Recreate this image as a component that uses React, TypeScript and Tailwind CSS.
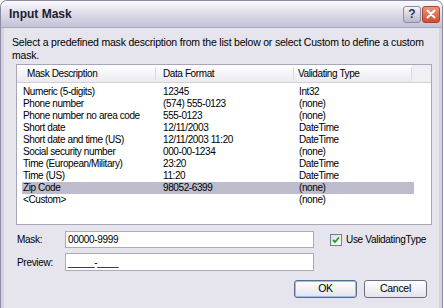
import React from 'react'

const rows = [
  ['Numeric (5-digits)', '12345', 'Int32'],
  ['Phone number', '(574) 555-0123', '(none)'],
  ['Phone number no area code', '555-0123', '(none)'],
  ['Short date', '12/11/2003', 'DateTime'],
  ['Short date and time (US)', '12/11/2003 11:20', 'DateTime'],
  ['Social security number', '000-00-1234', '(none)'],
  ['Time (European/Military)', '23:20', 'DateTime'],
  ['Time (US)', '11:20', 'DateTime'],
  ['Zip Code', '98052-6399', '(none)'],
  ['<Custom>', '', '(none)'],
]

const font = { fontFamily: '"Liberation Sans", Arial, sans-serif' }

function TitleButtons() {
  return (
    <div className="flex gap-[1px] mr-[2px]">
      <div className="w-[18px] h-[17px] rounded-[3px] border border-[#8d8ca6] bg-gradient-to-b from-[#f4f4f8] to-[#b9b8cc] flex items-center justify-center text-[12px] font-bold text-[#33334a]">
        ?
      </div>
      <div className="w-[18px] h-[17px] rounded-[3px] border border-[#a8432c] bg-gradient-to-b from-[#f0947a] to-[#cf4b2e] flex items-center justify-center">
        <svg width="10" height="10" viewBox="0 0 10 10">
          <path d="M1.5 1.5 L8.5 8.5 M8.5 1.5 L1.5 8.5" stroke="white" strokeWidth="2" strokeLinecap="round" />
        </svg>
      </div>
    </div>
  )
}

function Button({ label, primary }: { label: string; primary?: boolean }) {
  return (
    <div
      className={`w-[63px] h-[18px] rounded-[3px] border flex items-center justify-center bg-gradient-to-b from-[#ffffff] to-[#e4e3ec] text-[10.5px] text-black ${
        primary ? 'border-[#5a6b8c] shadow-[inset_0_0_0_1px_#9fbbe8]' : 'border-[#6b6b82]'
      }`}
    >
      {label}
    </div>
  )
}

export default function App() {
  return (
    <div className="w-[444px] h-[308px] bg-white overflow-hidden" style={font}>
      <div className="w-[443px] h-[308px] flex flex-col rounded-t-[7px] border border-[#8c8ba3] border-b-0 bg-[#d4d3e0]">
        {/* title bar */}
        <div className="h-[27px] flex items-center justify-between rounded-t-[6px] bg-gradient-to-b from-[#fbfbfd] via-[#dcdbe7] to-[#c3c2d6] border-b border-[#a9a8bd]">
          <span className="ml-[8px] text-[12px] font-bold text-[#1c1c30]">Input Mask</span>
          <TitleButtons />
        </div>
        {/* body */}
        <div className="flex-1 mx-[3px] bg-[#e6e5ed] flex flex-col text-[10px] text-black whitespace-nowrap tracking-[-0.3px]">
          <div className="ml-[8px] mt-[8px] leading-[13px] text-[10.5px] tracking-[-0.2px]">
            Select a predefined mask description from the list below or select Custom to define a custom
            <br />
            mask.
          </div>
          {/* list */}
          <div className="ml-[12px] mt-[2px] w-[416px] h-[161px] border border-[#a7a6ba] bg-white flex flex-col tracking-[-0.4px]">
            <div className="h-[18px] flex bg-gradient-to-b from-[#ffffff] to-[#ebeaf0] border-b border-[#d0cfda]">
              <div className="w-[139px] pl-[10px] flex items-center border-r border-[#dad9e2] my-[2px]">Mask Description</div>
              <div className="w-[138px] pl-[7px] flex items-center border-r border-[#dad9e2] my-[2px]">Data Format</div>
              <div className="w-[118px] pl-[4px] flex items-center border-r border-[#dad9e2] my-[2px]">Validating Type</div>
              <div className="flex-1 bg-[#f0eff4]" />
            </div>
            <div className="mt-[3px] flex flex-col">
              {rows.map(([a, b, c]) => (
                <div
                  key={a}
                  className={`h-[12px] w-[392px] ml-[5px] flex items-center leading-[12px] ${a === 'Zip Code' ? 'bg-[#bdbccd]' : ''}`}
                >
                  <div className="w-[134px] pl-[1px]">{a}</div>
                  <div className="w-[138px] pl-[7px]">{b}</div>
                  <div className="w-[120px] pl-[5px]">{c}</div>
                </div>
              ))}
            </div>
          </div>
          {/* fields */}
          <div className="ml-[13px] mt-[6px] flex items-center h-[17px]">
            <span className="w-[48px]">Mask:</span>
            <div className="w-[249px] h-[17px] border border-[#a9aabb] bg-white flex items-center pl-[2px]">00000-9999</div>
            <div className="ml-[16px] flex items-center gap-[4px]">
              <div className="w-[12px] h-[12px] border border-[#6e7f96] bg-gradient-to-br from-[#dcdce4] to-[#ffffff] flex items-center justify-center">
                <svg width="8" height="8" viewBox="0 0 8 8">
                  <path d="M1 4 L3 6 L7 1.5" stroke="#21a121" strokeWidth="1.8" fill="none" />
                </svg>
              </div>
              <span>Use ValidatingType</span>
            </div>
          </div>
          <div className="ml-[13px] mt-[5px] flex items-center h-[18px]">
            <span className="w-[48px]">Preview:</span>
            <div className="w-[249px] h-[18px] border border-[#a9aabb] bg-white flex items-center pl-[2px]">_____-____</div>
          </div>
          <div className="mt-[9px] ml-[290px] flex gap-[7px]">
            <Button label="OK" primary />
            <Button label="Cancel" />
          </div>
        </div>
      </div>
    </div>
  )
}
